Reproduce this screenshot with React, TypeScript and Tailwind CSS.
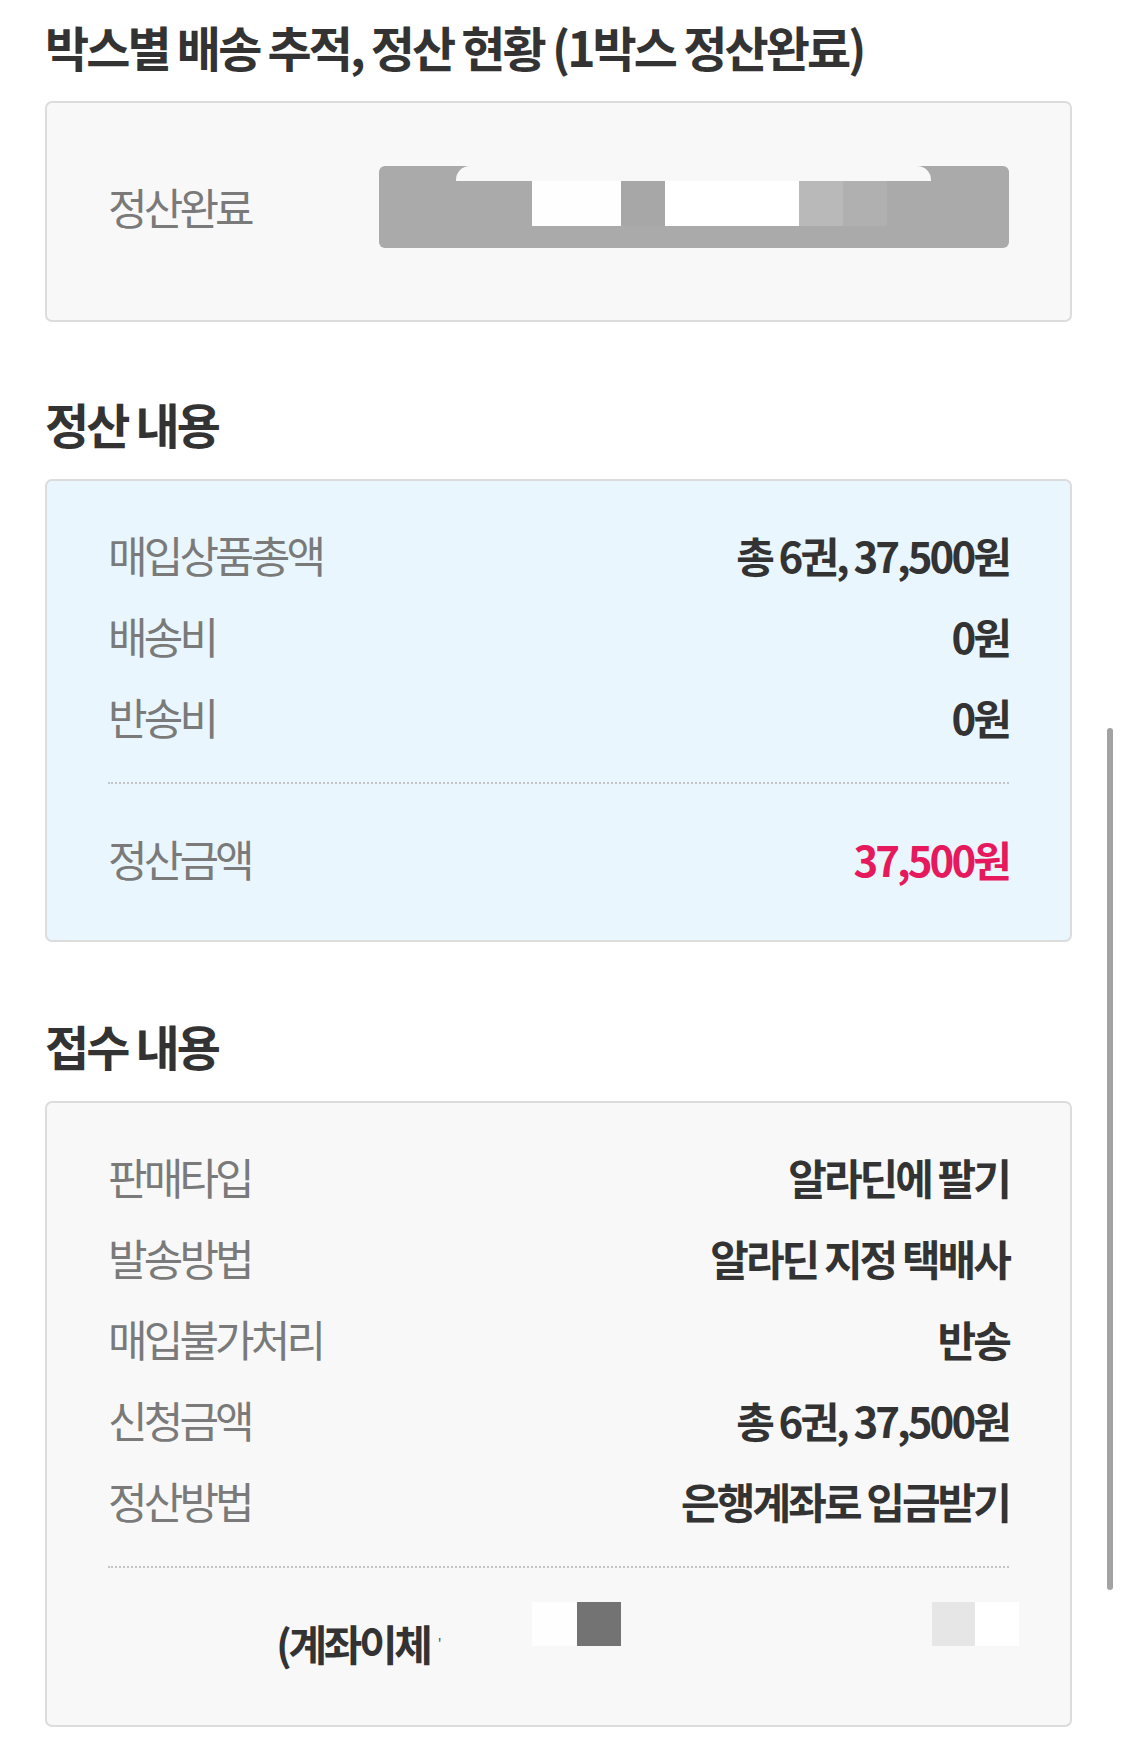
import React from "react";

const labelCls =
  "text-[43px] leading-none font-normal tracking-[-0.09em] text-[#7a7a7a]";
const valueCls =
  "text-[42px] leading-none font-bold tracking-[-0.07em] text-[#333333]";
const headCls =
  "text-[48px] leading-none font-bold tracking-[-0.06em] text-[#333333]";

function Row({ label, value, valueCls: vc }: { label: string; value: string; valueCls?: string }) {
  return (
    <div className="flex h-[81px] items-center justify-between">
      <span className={labelCls}>{label}</span>
      <span className={vc ?? valueCls}>{value}</span>
    </div>
  );
}

function Dotted() {
  return <div className="h-0 border-t-2 border-dotted border-[#c4c4c4]" />;
}

export default function App() {
  return (
    <div className="relative min-h-[1747px] bg-white pl-[45px] pr-[53px] font-['Noto_Sans_CJK_KR',sans-serif]">
      <div className="flex h-[92px] items-center">
        <h1 className={headCls}>박스별 배송 추적, 정산 현황 (1박스 정산완료)</h1>
      </div>

      <div className="mt-[9px] flex h-[221px] items-center rounded-[7px] border-2 border-[#dcdcdc] bg-[#f8f8f8] px-[61px] pb-[10px]">
        <span className={`${labelCls} w-[271px] shrink-0`}>정산완료</span>
        <div className="relative h-[82px] flex-1 rounded-[6px] bg-[#aaaaaa]">
          <div className="absolute left-[77px] top-0 h-[15px] w-[475px] rounded-t-[14px] bg-[#f8f8f8]" />
          <div className="absolute left-[153px] top-[15px] flex h-[45px]">
            <div className="w-[89px] bg-[#fefefe]" />
            <div className="w-[44px] bg-[#a7a7a7]" />
            <div className="w-[134px] bg-white" />
            <div className="w-[44px] bg-[#b9b9b9]" />
            <div className="w-[44px] bg-[#b0b0b0]" />
          </div>
        </div>
      </div>

      <div className="mt-[56px] flex h-[90px] items-center">
        <h2 className={headCls}>정산 내용</h2>
      </div>

      <div className="mt-[11px] rounded-[7px] border-2 border-[#dcdcdc] bg-[#eaf6fd] px-[61px] pt-[33px] pb-[41px]">
        <Row label="매입상품총액" value="총 6권, 37,500원" />
        <Row label="배송비" value="0원" />
        <Row label="반송비" value="0원" />
        <div className="mt-[25px]">
          <Dotted />
        </div>
        <div className="mt-[34px]">
          <Row
            label="정산금액"
            value="37,500원"
            valueCls="text-[42px] leading-none font-bold tracking-[-0.07em] text-[#e6195c]"
          />
        </div>
      </div>

      <div className="mt-[58px] flex h-[90px] items-center">
        <h2 className={headCls}>접수 내용</h2>
      </div>

      <div className="mt-[11px] rounded-[7px] border-2 border-[#dcdcdc] bg-[#f8f8f8] px-[61px] pt-[33px] pb-[42px]">
        <Row label="판매타입" value="알라딘에 팔기" />
        <Row label="발송방법" value="알라딘 지정 택배사" />
        <Row label="매입불가처리" value="반송" />
        <Row label="신청금액" value="총 6권, 37,500원" />
        <Row label="정산방법" value="은행계좌로 입금받기" />
        <div className="mt-[25px]">
          <Dotted />
        </div>
        <div className="relative mt-[34px] flex h-[81px] items-center pl-[168px]">
          <span className="text-[42px] leading-none font-bold tracking-[-0.08em] text-[#333333]">(계좌이체</span>
          <span className="ml-[8px] text-[14px] leading-none text-[#555]">'</span>
          <div className="absolute left-[424px] top-0 flex h-[44px]">
            <div className="w-[45px] bg-[#fefefe]" />
            <div className="w-[44px] bg-[#737373]" />
          </div>
          <div className="absolute left-[824px] top-0 flex h-[44px]">
            <div className="w-[43px] bg-[#e6e6e6]" />
            <div className="w-[44px] bg-white" />
          </div>
        </div>
      </div>

      <div className="absolute right-[12px] top-[728px] h-[862px] w-[6px] rounded-full bg-[#a3a3a3]" />
    </div>
  );
}
